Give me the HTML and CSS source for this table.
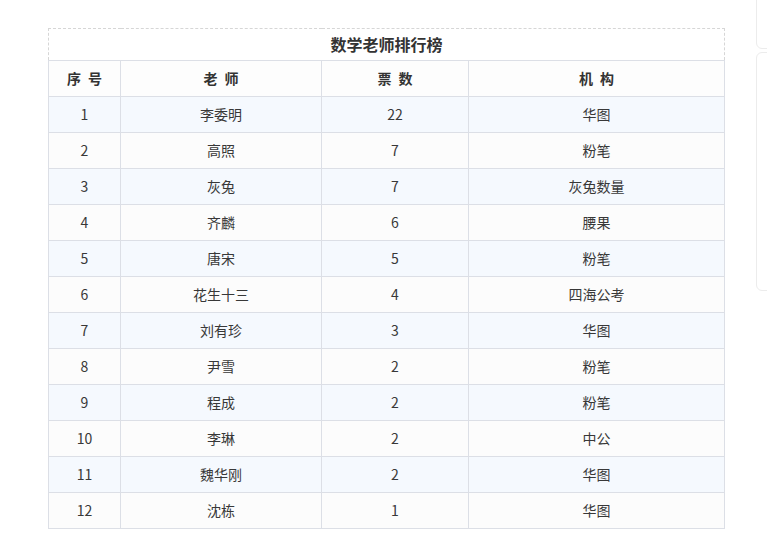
FILE: index.html
```html
<!DOCTYPE html>
<html lang="zh">
<head>
<meta charset="utf-8">
<link rel="stylesheet" href="styles.css">
</head>
<body>
<div class="page">
  <table class="rank">
    <colgroup>
      <col class="c1"><col class="c2"><col class="c3"><col class="c4">
    </colgroup>
    <thead>
      <tr class="title"><th colspan="4">数学老师排行榜</th></tr>
      <tr class="head"><th>序 号</th><th>老 师</th><th>票 数</th><th>机 构</th></tr>
    </thead>
    <tbody>
      <tr><td>1</td><td>李委明</td><td>22</td><td>华图</td></tr>
      <tr><td>2</td><td>高照</td><td>7</td><td>粉笔</td></tr>
      <tr><td>3</td><td>灰兔</td><td>7</td><td>灰兔数量</td></tr>
      <tr><td>4</td><td>齐麟</td><td>6</td><td>腰果</td></tr>
      <tr><td>5</td><td>唐宋</td><td>5</td><td>粉笔</td></tr>
      <tr><td>6</td><td>花生十三</td><td>4</td><td>四海公考</td></tr>
      <tr><td>7</td><td>刘有珍</td><td>3</td><td>华图</td></tr>
      <tr><td>8</td><td>尹雪</td><td>2</td><td>粉笔</td></tr>
      <tr><td>9</td><td>程成</td><td>2</td><td>粉笔</td></tr>
      <tr><td>10</td><td>李琳</td><td>2</td><td>中公</td></tr>
      <tr><td>11</td><td>魏华刚</td><td>2</td><td>华图</td></tr>
      <tr><td>12</td><td>沈栋</td><td>1</td><td>华图</td></tr>
    </tbody>
  </table>
  <div class="side side-top"></div>
  <div class="side side-mid"></div>
</div>
</body>
</html>
```
FILE: styles.css
```css
html, body {
  margin: 0;
  padding: 0;
  background: #fff;
}
.page {
  position: relative;
  width: 767px;
  height: 554px;
  overflow: hidden;
  padding: 28px 0 0 48px;
  box-sizing: border-box;
  font-family: "Noto Sans CJK SC", "Microsoft YaHei", sans-serif;
  color: #333;
}
.rank {
  border-collapse: collapse;
  table-layout: fixed;
  width: 676px;
  font-size: 14px;
}
.c1 { width: 72px; }
.c2 { width: 201px; }
.c3 { width: 147px; }
.c4 { width: 256px; }
.rank th, .rank td {
  border: 1px solid #dcdfe6;
  text-align: center;
  padding: 0 0 2px;
  line-height: 20px;
}
.title th {
  height: 29px;
  border: 1px dashed #d6d6d6;
  border-bottom: 1px solid #dcdfe6;
  font-size: 16px;
  font-weight: bold;
  color: #333;
  background: #fff;
}
.head th {
  height: 33px;
  font-weight: bold;
  font-size: 14px;
  color: #333;
  background: #fdfdfd;
  word-spacing: 4px;
}
.rank tbody td {
  height: 33px;
  color: #383838;
}
.rank tbody tr:nth-child(odd) td { background: #f5f9fe; }
.rank tbody tr:nth-child(even) td { background: #fcfcfc; }
.side {
  position: absolute;
  left: 756px;
  width: 40px;
  border: 1px solid #ececec;
  border-radius: 0 0 0 6px;
  box-sizing: border-box;
}
.side-top { top: -10px; height: 59px; }
.side-mid { top: 52px; height: 239px; border-radius: 6px 0 0 6px; }
```
